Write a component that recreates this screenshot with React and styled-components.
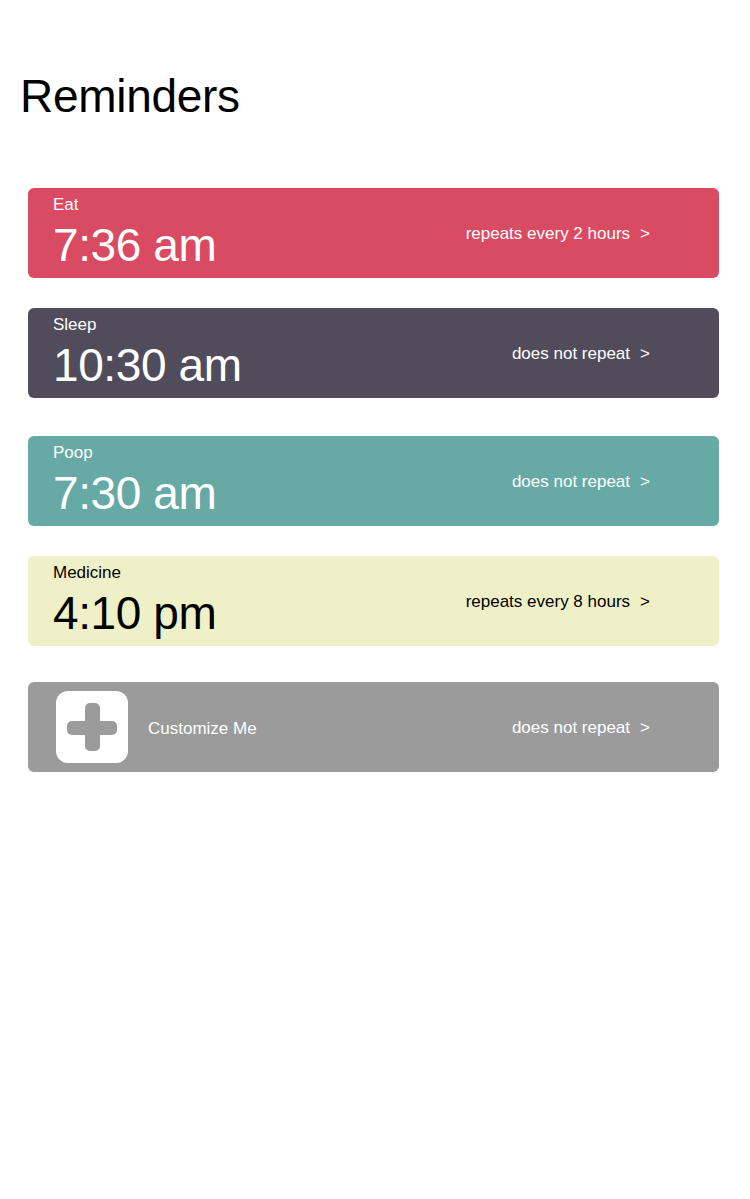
import React from 'react';
import styled, { createGlobalStyle } from 'styled-components';

const GlobalStyle = createGlobalStyle`
  body {
    margin: 0;
    background: #ffffff;
    font-family: "Liberation Sans", Arial, sans-serif;
  }
`;

const Page = styled.div`
  padding: 73px 31px 0 20px;
`;

const Title = styled.h1`
  margin: 0 0 69px 0;
  font-size: 46px;
  line-height: 46px;
  font-weight: 400;
  color: #000;
  letter-spacing: -0.3px;
`;

const List = styled.div`
  display: flex;
  flex-direction: column;
  padding-left: 8px;
`;

const Card = styled.div`
  display: flex;
  align-items: center;
  justify-content: space-between;
  height: 90px;
  box-sizing: border-box;
  margin-top: ${p => p.$space}px;
  padding: 0 69px 0 25px;
  border-radius: 6px;
  background: ${p => p.$bg};
  color: ${p => p.$fg};
`;

const Left = styled.div`
  display: flex;
  flex-direction: column;
  align-self: flex-start;
  padding-top: 7px;
`;

const Label = styled.div`
  font-size: 17px;
  line-height: 20px;
`;

const Time = styled.div`
  margin-top: 7px;
  font-size: 46px;
  line-height: 46px;
  letter-spacing: -0.4px;
`;

const Repeat = styled.div`
  display: flex;
  align-items: center;
  font-size: 17px;
  line-height: 20px;
  margin-top: 2px;
`;

const Chevron = styled.span`
  margin-left: 10px;
`;

const CustomLeft = styled.div`
  display: flex;
  align-items: center;
  gap: 20px;
  margin-left: 3px;
`;

const CustomText = styled.span`
  font-size: 17px;
  margin-top: 4px;
`;

const PlusIcon = () => (
  <svg width="72" height="72" viewBox="0 0 72 72">
    <rect x="0" y="0" width="72" height="72" rx="12" fill="#ffffff" />
    <rect x="29" y="12" width="15" height="48" rx="5" fill="#9b9b9b" />
    <rect x="11" y="30" width="50" height="14" rx="5" fill="#9b9b9b" />
  </svg>
);

const reminders = [
  { label: 'Eat', time: '7:36 am', repeat: 'repeats every 2 hours', bg: '#d94b62', fg: '#ffffff', space: 0 },
  { label: 'Sleep', time: '10:30 am', repeat: 'does not repeat', bg: '#504c5b', fg: '#ffffff', space: 30 },
  { label: 'Poop', time: '7:30 am', repeat: 'does not repeat', bg: '#67a9a4', fg: '#ffffff', space: 38 },
  { label: 'Medicine', time: '4:10 pm', repeat: 'repeats every 8 hours', bg: '#f0f0c8', fg: '#000000', space: 30 },
];

export default function App() {
  return (
    <Page>
      <GlobalStyle />
      <Title>Reminders</Title>
      <List>
        {reminders.map(r => (
          <Card key={r.label} $bg={r.bg} $fg={r.fg} $space={r.space}>
            <Left>
              <Label>{r.label}</Label>
              <Time>{r.time}</Time>
            </Left>
            <Repeat>
              {r.repeat}
              <Chevron>&gt;</Chevron>
            </Repeat>
          </Card>
        ))}
        <Card $bg="#9b9b9b" $fg="#ffffff" $space={36}>
          <CustomLeft>
            <PlusIcon />
            <CustomText>Customize Me</CustomText>
          </CustomLeft>
          <Repeat>
            does not repeat
            <Chevron>&gt;</Chevron>
          </Repeat>
        </Card>
      </List>
    </Page>
  );
}
